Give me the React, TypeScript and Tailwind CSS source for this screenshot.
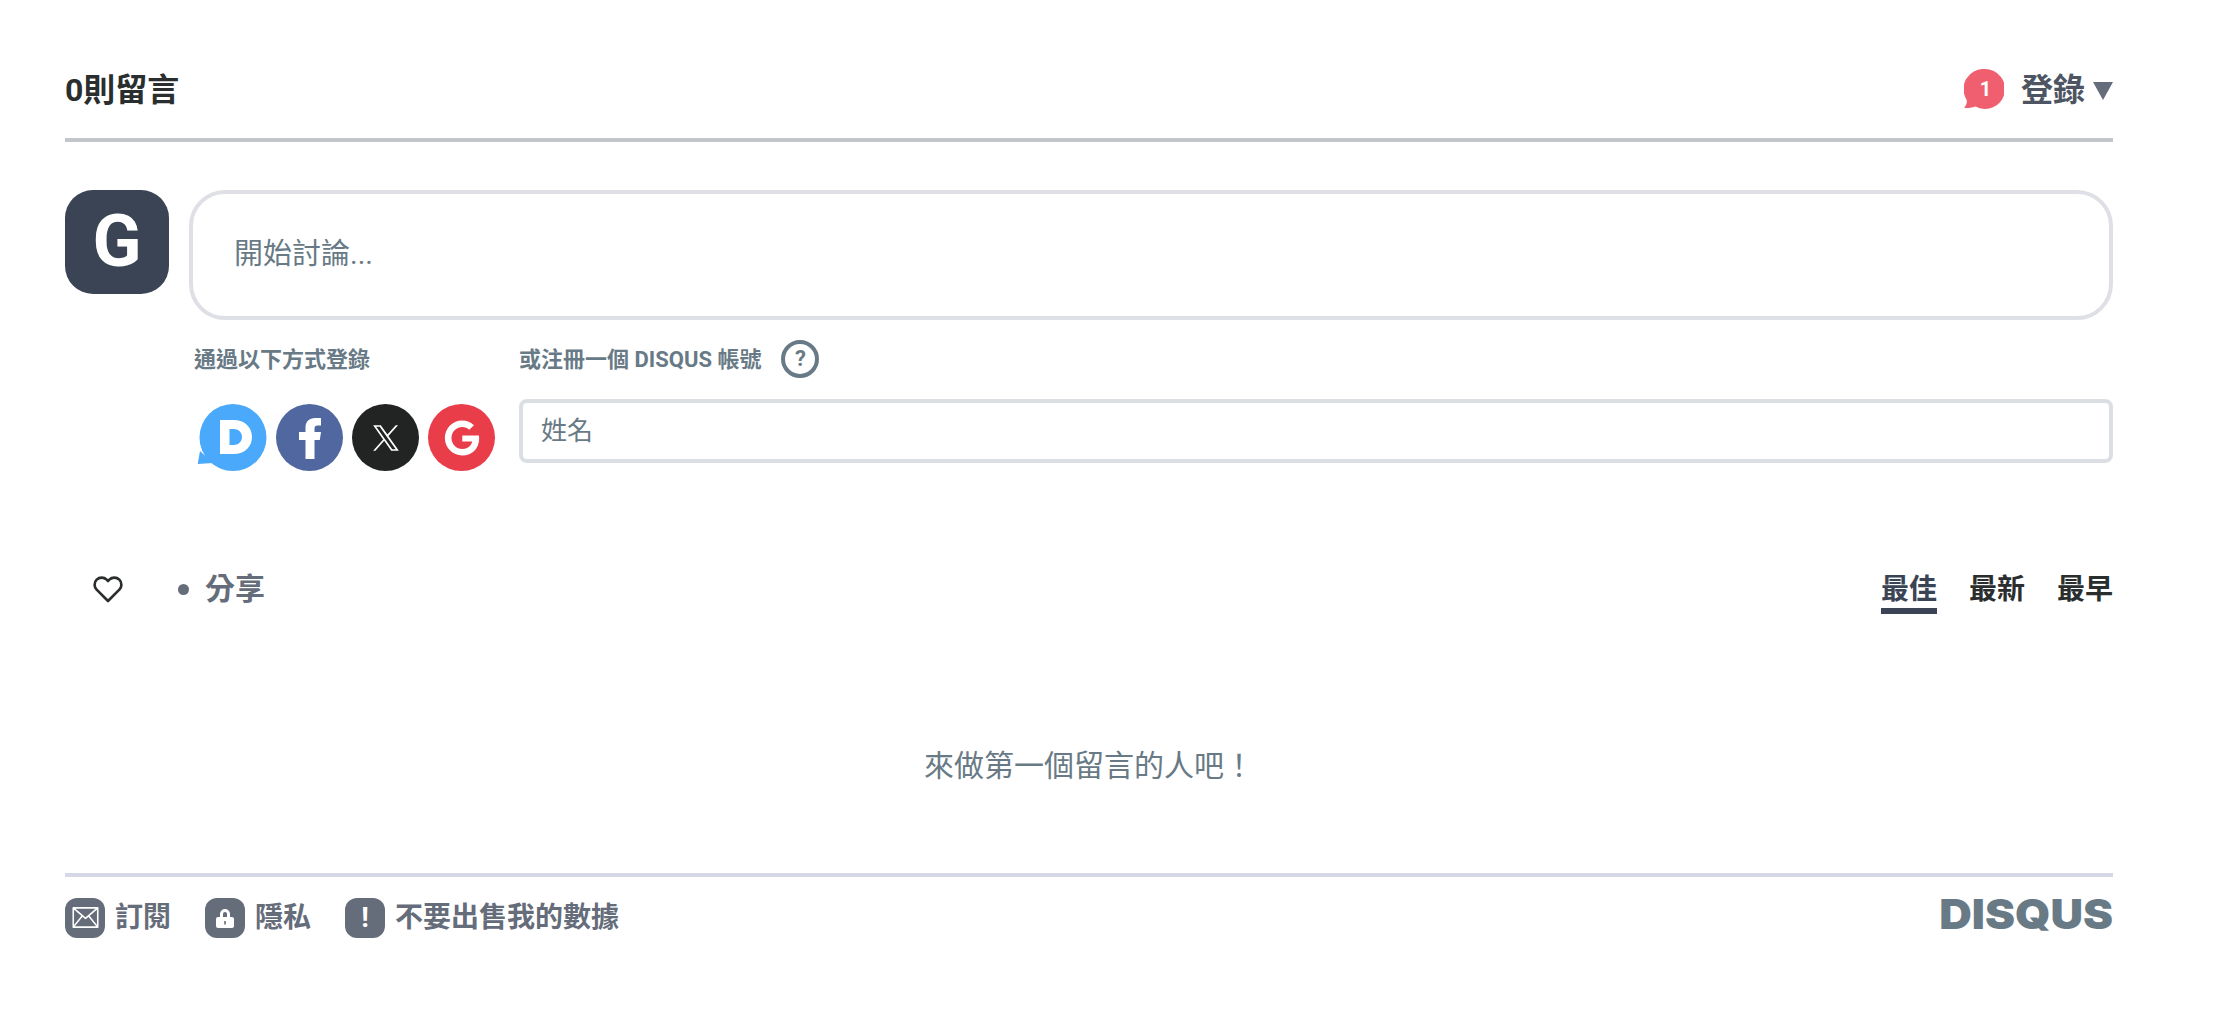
import { FaGoogle } from 'react-icons/fa6';

const fontStack = "font-['Roboto','Noto_Sans_CJK_TC',sans-serif]";

function Badge() {
  return (
    <div className="relative w-[40px] h-[41px] flex items-center justify-center pl-[3px]">
      <svg viewBox="0 0 40 41" className="absolute inset-0 w-full h-full">
        <path d="M21 0a20 20 0 1 1-9.500 37.600C8 39 4 39.500 0 38.500c2.500-2 3.300-4.500 2.600-7.800A20 20 0 0 1 21 0Z" fill="#f05f70" />
      </svg>
      <span className="relative text-[20px] font-bold text-white leading-none">1</span>
    </div>
  );
}

function SocialDisqus() {
  return (
    <svg viewBox="0 0 70 67" className="w-[70px] h-[67px] shrink-0">
      <circle cx="36" cy="33.500" r="33.500" fill="#4aa9fb" />
      <path d="M3 47 .7 60 16 59Z" fill="#4aa9fb" />
      <path fillRule="evenodd" d="M23 16h13.500C48 16 55 23.500 55 33S48 50 36.500 50H23ZM32.500 25v16h4c5 0 8.500-3.300 8.500-8s-3.500-8-8.500-8Z" fill="#fff" />
    </svg>
  );
}

function SocialCircle({ bg, children }: { bg: string; children: React.ReactNode }) {
  return (
    <div className={`w-[67px] h-[67px] rounded-full flex items-center justify-center text-white shrink-0 ${bg}`}>
      {children}
    </div>
  );
}

function FooterIcon({ children }: { children: React.ReactNode }) {
  return (
    <div className="w-[40px] h-[40px] rounded-[12px] bg-[#656c7a] flex items-center justify-center text-white shrink-0">
      {children}
    </div>
  );
}

export default function App() {
  return (
    <div className={`bg-white min-h-[1016px] pl-[65px] pt-[64px] ${fontStack}`}>
      <div className="w-[2048px]">
        <header className="flex items-center justify-between h-[50px] pb-[24px] border-b-4 border-[#c2c6cc] box-content">
          <h2 className="mt-[2px] text-[32px] font-bold text-[#2a2e2e] leading-[50px]">0則留言</h2>
          <div className="flex items-center">
            <Badge />
            <span className="ml-[17px] mt-[2px] text-[32px] font-bold text-[#4d5563] leading-none">登錄</span>
            <svg viewBox="0 0 20 18" className="ml-[8px] mt-[3px] w-[20px] h-[18px]">
              <path d="M0 0h20L10 18Z" fill="#656c7a" />
            </svg>
          </div>
        </header>

        <div className="flex gap-[20px] mt-[48px]">
          <div className="w-[104px] h-[104px] rounded-[28px] bg-[#3a4454] flex items-center justify-center text-white text-[72px] font-bold leading-none shrink-0">
            G
          </div>
          <div className="flex-1 h-[130px] border-4 border-[#dee0e6] rounded-[36px] flex items-center pl-[41px] text-[29px] text-[#687a86]">
            開始討論...
          </div>
        </div>

        <div className="flex ml-[129px] mt-[20px]">
          <div className="w-[325px] shrink-0">
            <div className="h-[38px] flex items-center text-[22px] font-bold text-[#687a86]">通過以下方式登錄</div>
            <div className="flex gap-[9px] mt-[26px] ml-[3px]">
              <SocialDisqus />
              <SocialCircle bg="bg-[#50689f]">
                <svg viewBox="0 0 22 41" className="w-[22px] h-[41px] mt-[2px]" fill="#fff">
                  <path d="M6.500 41V22H0v-8h6.500V9.500C6.500 3.500 10.500 0 16 0h6v7.500h-3.500c-2.500 0-3 1.200-3 3.500v3H22l-1.200 8h-5.300v19Z" />
                </svg>
              </SocialCircle>
              <SocialCircle bg="bg-[#222424]">
                <svg viewBox="0 0 24 24" className="w-[28px] h-[28px]" fill="#fff">
                  <path d="M14.095 10.316 22.286 1h-1.940L13.230 9.088 7.551 1H1l8.590 12.231L1 23h1.940l7.510-8.540L16.450 23H23L14.095 10.316Zm-2.658 3.022-.871-1.218L3.640 2.432h2.980l5.590 7.821.870 1.219 7.265 10.166h-2.982l-5.926-8.300Z" />
                </svg>
              </SocialCircle>
              <SocialCircle bg="bg-[#e93d49]"><FaGoogle className="w-[36px] h-[36px]" /></SocialCircle>
            </div>
          </div>
          <div className="flex-1">
            <div className="h-[38px] flex items-center text-[22px] font-bold text-[#687a86]">
              或注冊一個 DISQUS 帳號
              <span className="ml-[20px] w-[38px] h-[38px] rounded-full border-4 border-[#687a86] flex items-center justify-center text-[22px] font-bold leading-none">?</span>
            </div>
            <div className="mt-[21px] h-[64px] border-4 border-[#dbdfe4] rounded-[8px] flex items-center pl-[18px] text-[26px] text-[#687a86]">
              姓名
            </div>
          </div>
        </div>

        <div className="flex items-center justify-between mt-[88px] h-[60px]">
          <div className="flex items-center">
            <svg viewBox="0 0 24 24" className="ml-[27px] w-[32px] h-[32px]" fill="none" stroke="#2a2e2e" strokeWidth="2" strokeLinejoin="round">
              <path d="M12 21 3.500 12.500a5.300 5.300 0 0 1 7.500-7.500l1 1 1-1a5.300 5.300 0 0 1 7.500 7.500Z" />
            </svg>
            <span className="ml-[54px] w-[11px] h-[11px] rounded-full bg-[#656c7a]" />
            <span className="ml-[16px] text-[30px] font-bold text-[#656c7a] leading-none">分享</span>
          </div>
          <nav className="flex gap-[32px] mt-[1px] text-[28px] font-bold text-[#2a2e2e] leading-none">
            <span className="relative text-[#3a4454]">
              最佳
              <span className="absolute left-0 right-0 -bottom-[10px] h-[6px] bg-[#3a4454]" />
            </span>
            <span>最新</span>
            <span>最早</span>
          </nav>
        </div>

        <p className="text-center mt-[127px] text-[30px] text-[#687a86] leading-[40px]">來做第一個留言的人吧！</p>

        <footer className="mt-[87px] border-t-4 border-[#d7d8e5] pt-[17px] flex items-center justify-between">
          <div className="flex items-center text-[28px] font-bold text-[#656c7a] leading-none">
            <FooterIcon>
              <svg viewBox="0 0 30 24" className="w-[27px] h-[21px]" fill="none" stroke="#fff" strokeWidth="1.800" strokeLinejoin="round">
                <path d="M1 1h28v22H1ZM1 1l14 12L29 1M1 23l10-12.500M29 23 19 10.500" />
              </svg>
            </FooterIcon>
            <span className="ml-[10px]">訂閱</span>
            <div className="ml-[34px]">
              <FooterIcon>
                <svg viewBox="0 0 18 20" className="w-[18px] h-[20px]">
                  <path fillRule="evenodd" d="M4 9V6a5 5 0 0 1 10 0v3h2a2 2 0 0 1 2 2v7a2 2 0 0 1-2 2H2a2 2 0 0 1-2-2v-7a2 2 0 0 1 2-2Zm3 0h4V6a2 2 0 0 0-4 0ZM8.200 13v3.500h1.600V13Z" fill="#fff" />
                </svg>
              </FooterIcon>
            </div>
            <span className="ml-[10px]">隱私</span>
            <div className="ml-[34px]">
              <FooterIcon>
                <span className="text-[28px] font-bold text-white leading-none">!</span>
              </FooterIcon>
            </div>
            <span className="ml-[10px]">不要出售我的數據</span>
          </div>
          <span className="font-['Inter',sans-serif] font-black text-[41px] text-[#687a86] leading-none mb-[6px] origin-right scale-x-110">DISQUS</span>
        </footer>
      </div>
    </div>
  );
}
